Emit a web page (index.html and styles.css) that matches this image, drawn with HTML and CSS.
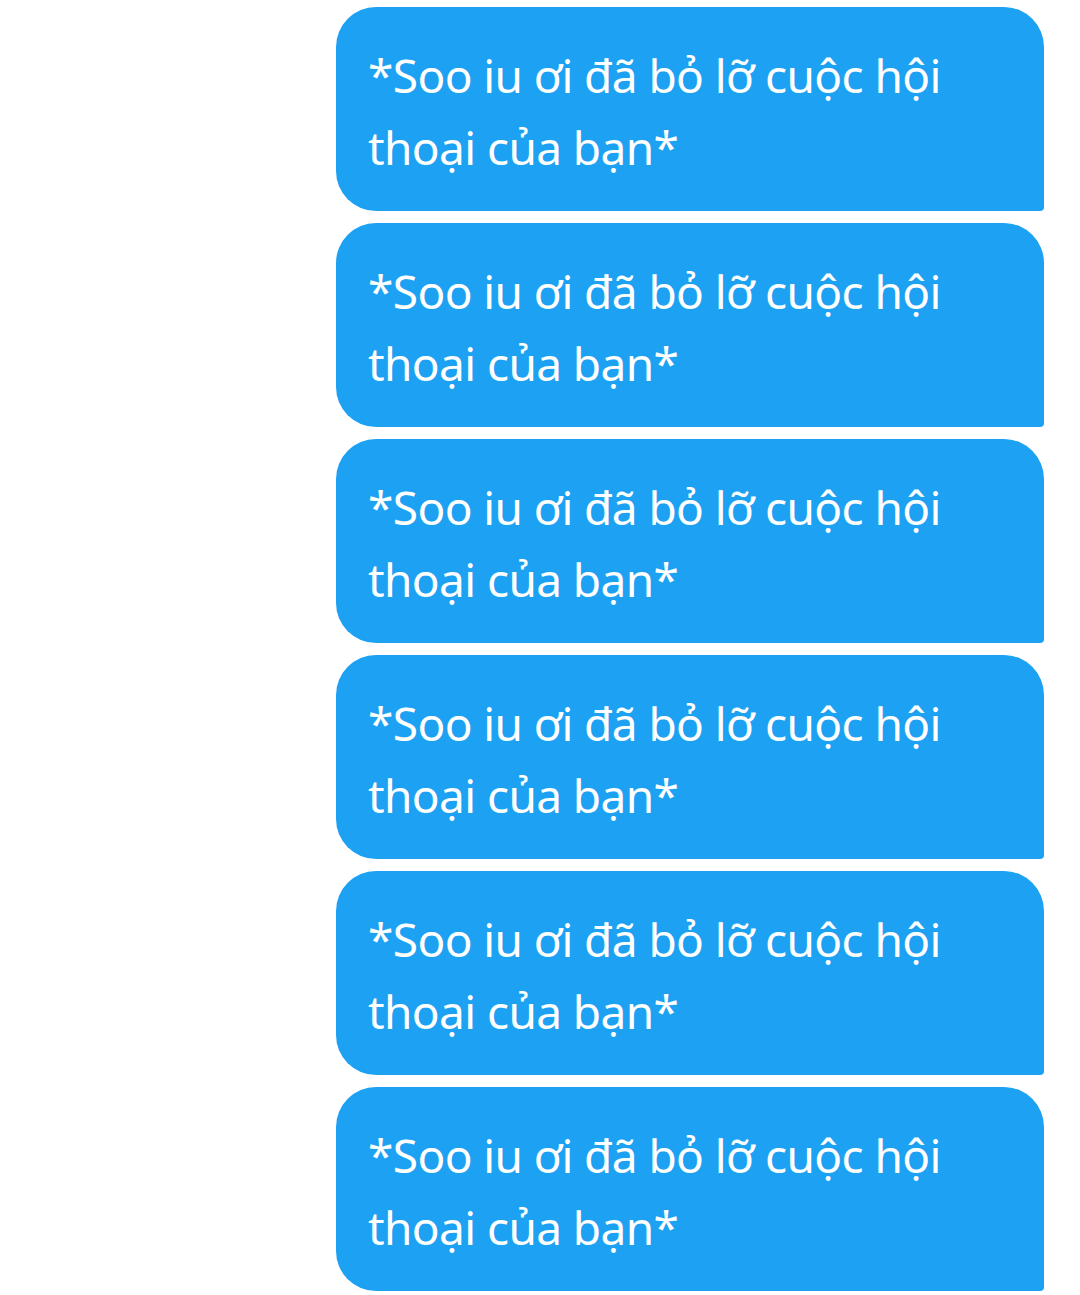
FILE: index.html
```html
<!DOCTYPE html>
<html lang="vi">
<head>
<meta charset="utf-8">
<link rel="stylesheet" href="styles.css">
</head>
<body>
<div class="thread">
  <div class="bubble"><p class="msg">*Soo iu ơi đã bỏ lỡ cuộc hội thoại của bạn*</p></div>
  <div class="bubble"><p class="msg">*Soo iu ơi đã bỏ lỡ cuộc hội thoại của bạn*</p></div>
  <div class="bubble"><p class="msg">*Soo iu ơi đã bỏ lỡ cuộc hội thoại của bạn*</p></div>
  <div class="bubble"><p class="msg">*Soo iu ơi đã bỏ lỡ cuộc hội thoại của bạn*</p></div>
  <div class="bubble"><p class="msg">*Soo iu ơi đã bỏ lỡ cuộc hội thoại của bạn*</p></div>
  <div class="bubble"><p class="msg">*Soo iu ơi đã bỏ lỡ cuộc hội thoại của bạn*</p></div>
</div>
</body>
</html>
```

FILE: styles.css
```css
html, body {
  margin: 0;
  padding: 0;
  background: #ffffff;
}
.thread {
  display: flex;
  flex-direction: column;
  align-items: flex-end;
  gap: 12px;
  padding: 7px 36px 0 0;
}
.bubble {
  box-sizing: border-box;
  width: 708px;
  height: 204px;
  background: #1da1f2;
  border-radius: 40px 40px 4px 40px;
  padding: 32px 40px 28px 32px;
}
.msg {
  margin: 0;
  width: 600px;
  color: #ffffff;
  font-family: "Noto Sans", "Open Sans", sans-serif;
  font-size: 46px;
  line-height: 72px;
  letter-spacing: -0.6px;
}
```
